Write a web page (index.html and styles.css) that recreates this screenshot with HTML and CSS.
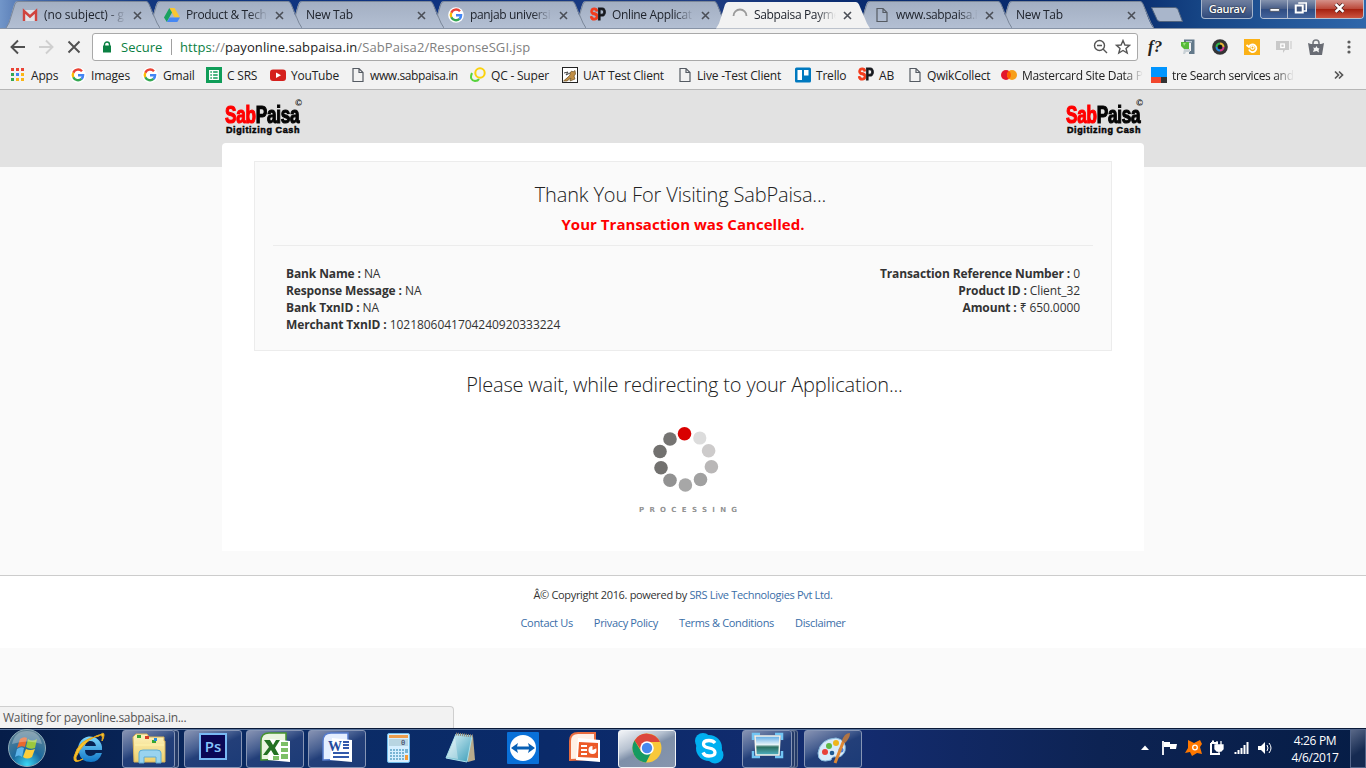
FILE: index.html
```html
<!DOCTYPE html>
<html lang="en">
<head>
<meta charset="utf-8">
<title>Sabpaisa Payment</title>
<link rel="stylesheet" href="styles.css">
</head>
<body>
<svg class="defs" width="0" height="0">
<defs>
<linearGradient id="tabFill" x1="0" y1="0" x2="0" y2="1"><stop offset="0" stop-color="#a3afc2"/><stop offset="1" stop-color="#b3bfd3"/></linearGradient>
<radialGradient id="orb" cx=".5" cy=".95" r=".9"><stop offset="0" stop-color="#39d7f5"/><stop offset=".45" stop-color="#1b6a9e"/><stop offset="1" stop-color="#5d8195"/></radialGradient>
<linearGradient id="ieBlue" x1="0" y1="0" x2="0" y2="1"><stop offset="0" stop-color="#7fd6fb"/><stop offset="1" stop-color="#0f77c8"/></linearGradient>
<linearGradient id="folder" x1="0" y1="0" x2="0" y2="1"><stop offset="0" stop-color="#fdf3bd"/><stop offset="1" stop-color="#edcf6c"/></linearGradient>
<linearGradient id="pad" x1="0" y1="0" x2="1" y2="1"><stop offset="0" stop-color="#e5f7fb"/><stop offset="1" stop-color="#3a9db9"/></linearGradient>
<linearGradient id="photo" x1="0" y1="0" x2="0" y2="1"><stop offset="0" stop-color="#5ba9e6"/><stop offset=".45" stop-color="#e5f3f8"/><stop offset=".58" stop-color="#2c7060"/><stop offset="1" stop-color="#4fb0c4"/></linearGradient>
<symbol id="tab" viewBox="0 0 154 28"><path d="M0 28C4 25 7 3 10 1.5H141C144 3 149 25 154 28Z" fill="url(#tabFill)"/><path d="M0 28L3 23L9 4Q10 1.5 12 1.5H140Q142 1.5 143 4L151 23L154 28" fill="none" stroke="#7b8799"/></symbol>
<symbol id="tabOn" viewBox="0 0 154 28"><path d="M0 28L3 23L9 4Q10 1.5 12 1.5H140Q142 1.5 143 4L151 23L154 28Z" fill="#f2f2f2"/></symbol>
<symbol id="x" viewBox="0 0 9 9"><path d="M1 1L8 8M8 1L1 8" stroke="#4b4f57" stroke-width="1.6"/></symbol>
<symbol id="goog" viewBox="0 0 16 16"><circle cx="8" cy="8" r="7.8" fill="#fff"/><g fill="none" stroke-width="2.4"><path d="M12 4.2A5.2 5.2 0 0 0 3.3 5.8" stroke="#ea4335"/><path d="M3.3 5.7A5.2 5.2 0 0 0 3.3 10.3" stroke="#fbbc05"/><path d="M3.3 10.2A5.2 5.2 0 0 0 11.5 11.9" stroke="#34a853"/><path d="M8 8.2H13.1A5 5 0 0 1 11.4 12" stroke="#4285f4"/></g></symbol>
<symbol id="page" viewBox="0 0 16 16"><path d="M3 1.5H9L13 5.5V14.5H3ZM9 1.5V5.5H13" fill="none" stroke="#555b63" stroke-width="1.2"/></symbol>
</defs>
</svg>

<header class="tabstrip">
  <div class="tab"><svg class="shape"><use href="#tab"/></svg><svg class="ic" viewBox="0 0 16 16"><path d="M1 3H15V14H1Z" fill="#dfe3e8"/><path d="M2 14V4L8 9.5L14 4V14" fill="none" stroke="#d0443e" stroke-width="2.4"/></svg><span class="t">(no subject) - g</span><svg class="close"><use href="#x"/></svg></div>
  <div class="tab"><svg class="shape"><use href="#tab"/></svg><svg class="ic" viewBox="0 0 16 16"><path d="M5.3 1H10.6L16 10.5H10.6Z" fill="#f8c633"/><path d="M5.3 1L8 5.6L2.8 15L0 10.5Z" fill="#1aa260"/><path d="M5.600 10.500H16L13.300 15H2.800Z" fill="#4587f3"/></svg><span class="t">Product &amp; Tech</span><svg class="close"><use href="#x"/></svg></div>
  <div class="tab"><svg class="shape"><use href="#tab"/></svg><span class="t bare">New Tab</span><svg class="close"><use href="#x"/></svg></div>
  <div class="tab"><svg class="shape"><use href="#tab"/></svg><svg class="ic"><use href="#goog"/></svg><span class="t">panjab universi</span><svg class="close"><use href="#x"/></svg></div>
  <div class="tab"><svg class="shape"><use href="#tab"/></svg><span class="ic sp"><b>S</b>P</span><span class="t">Online Applicat</span><svg class="close"><use href="#x"/></svg></div>
  <div class="tab on"><svg class="shape"><use href="#tabOn"/></svg><svg class="ic" viewBox="0 0 16 16"><path d="M1.500 9A6.500 6.500 0 0 1 14.500 9" fill="none" stroke="#9a9a9a" stroke-width="1.800"/></svg><span class="t">Sabpaisa Payme</span><svg class="close"><use href="#x"/></svg></div>
  <div class="tab"><svg class="shape"><use href="#tab"/></svg><svg class="ic"><use href="#page"/></svg><span class="t">www.sabpaisa.i</span><svg class="close"><use href="#x"/></svg></div>
  <div class="tab"><svg class="shape"><use href="#tab"/></svg><span class="t bare">New Tab</span><svg class="close"><use href="#x"/></svg></div>
  <svg class="newtab" viewBox="0 0 34 18"><path d="M1.5 1.5H25Q27 1.5 28 3.5L32.5 15.5H10Q8 15.5 7 13.5Z" fill="#a9b6cb" stroke="#52647f"/></svg>
  <div class="user">Gaurav</div>
  <div class="winbtns">
    <span class="wb"><svg viewBox="0 0 28 17"><path d="M9.500 8.500H19.500V11.500H9.500Z" fill="#fff" stroke="#4c5566"/></svg></span>
    <span class="wb"><svg viewBox="0 0 26 17"><path d="M10 3H18V11H15" fill="none" stroke="#fff" stroke-width="1.5"/><rect x="7.500" y="5.500" width="7" height="7" fill="#42567d" stroke="#fff" stroke-width="2"/></svg></span>
    <span class="wb red"><svg viewBox="0 0 48 17"><path d="M20 4L28 12M28 4L20 12" stroke="#4a2020" stroke-width="4"/><path d="M20 4L28 12M28 4L20 12" stroke="#fff" stroke-width="2.6"/></svg></span>
  </div>
</header>

<div class="toolbar">
  <svg class="nav" viewBox="0 0 92 32"><g fill="none" stroke-width="1.9"><path d="M25 15H12M18 8.500L11.500 15L18 21.500" stroke="#505050"/><path d="M39 15H52M46 8.500L52.500 15L46 21.500" stroke="#cfcfcf"/><path d="M68.500 9.500L79.500 20.500M79.500 9.500L68.500 20.500" stroke="#505050"/></g></svg>
  <div class="urlbox">
    <svg class="lock" viewBox="0 0 10 12"><path d="M2.500 5V3.500A2.500 2.500 0 0 1 7.500 3.500V5" fill="none" stroke="#0b8043" stroke-width="1.4"/><rect x="1" y="4.500" width="8" height="7" fill="#0b8043"/></svg>
    <span class="secure">Secure</span><span class="bar"></span>
    <span class="url"><i class="g">https</i><i>://</i>payonline.sabpaisa.in<i>/SabPaisa2/ResponseSGI.jsp</i></span>
    <svg class="urlic" viewBox="0 0 38 16"><g fill="none" stroke="#555" stroke-width="1.4"><circle cx="6.500" cy="6.500" r="5"/><path d="M4 6.500H9M10 10L14 14"/><path d="M30 1.500L31.900 6L36.500 6.300L33 9.400L34.200 14L30 11.500L25.800 14L27 9.400L23.500 6.300L28.100 6Z"/></g></svg>
  </div>
  <div class="exts">
    <span class="fq">f?</span>
    <svg viewBox="0 0 16 16"><path d="M4 .5H14.500V15H9V12H11V4H4Z" fill="#63798a"/><path d="M6 2H12V3.500H6Z" fill="#b4c2cd"/><path d="M1 3H9V10H4L1 7Z" fill="#57ba3a"/><path d="M3 4L6 4L4 7Z" fill="#9be27d"/><path d="M4 10H10V13H6L5 15H3Z" fill="#c9d1d6"/></svg>
    <svg viewBox="0 0 16 16"><circle cx="8" cy="8" r="7.800" fill="#343536"/><g fill="none" stroke-width="2"><path d="M4.500 8A3.500 3.500 0 0 1 8 4.500" stroke="#31b54b"/><path d="M8 4.500A3.500 3.500 0 0 1 11.500 8" stroke="#e6b635"/><path d="M11.500 8A3.500 3.500 0 0 1 8 11.500" stroke="#d83b8f"/><path d="M8 11.500A3.500 3.500 0 0 1 4.500 8" stroke="#2588df"/></g><circle cx="8" cy="8" r="2" fill="#111"/></svg>
    <svg viewBox="0 0 16 16"><path d="M0 0H16V16H0Z" fill="#fbb116"/><path d="M2.500 6L5 8A3.800 3.800 0 1 1 5 10.500" fill="none" stroke="#fff" stroke-width="1.800"/><circle cx="8.500" cy="8.500" r="1.600" fill="none" stroke="#fff" stroke-width="1.200"/></svg>
    <svg viewBox="0 0 16 16"><path d="M0 2H13V11H9L7 14V11H0Z" fill="#c9c9c9"/><path d="M14 2H16V10H14Z" fill="#dcdcdc"/><rect x="4.800" y="5" width="3.500" height="3.500" fill="none" stroke="#fff" stroke-width="1.300"/></svg>
    <svg viewBox="0 0 16 16"><path d="M5 5V4A3 3 0 0 1 11 4V5" fill="none" stroke="#777a80" stroke-width="1.600"/><path d="M0 4L3 5H13L16 4L14 16H2Z" fill="#696c74"/><path d="M5 13L6 10L5 8.500L7.300 9L8.500 7L9.500 9L11.500 9.500L10.500 11L11 13.500L8.500 12Z" fill="#f5f5f5"/></svg>
    <svg viewBox="0 0 16 16"><g fill="#5c5c5c"><circle cx="9" cy="3" r="1.600"/><circle cx="9" cy="8" r="1.600"/><circle cx="9" cy="13" r="1.600"/></g></svg>
  </div>
</div>

<nav class="bookmarks">
  <span><svg viewBox="0 0 16 16"><g fill="#ea4335"><path d="M0 1h3v3H0zM5 1h3v3H5zM10 1h3v3h-3z"/></g><path d="M0 6h3v3H0zM0 11h3v3H0z" fill="#34a853"/><path d="M5 6h3v3H5z" fill="#4285f4"/><path d="M10 6h3v3h-3zM5 11h3v3H5zM10 11h3v3h-3z" fill="#fbb616"/></svg><em>Apps</em></span>
  <span><svg><use href="#goog"/></svg><em>Images</em></span>
  <span><svg><use href="#goog"/></svg><em>Gmail</em></span>
  <span><svg viewBox="0 0 16 16"><rect width="16" height="16" fill="#0f9d58"/><path d="M3.700 3.700H12.300V12.300H3.700ZM3.700 6.500H12.300M3.700 9.500H12.300M6.500 3.700V12.300" fill="none" stroke="#fff" stroke-width="1.300"/></svg><em>C SRS</em></span>
  <span><svg viewBox="0 0 16 16"><rect y="2.500" width="16" height="11.500" rx="3" fill="#d5201d"/><path d="M6 5.500L11 8.200L6 11Z" fill="#fff"/></svg><em>YouTube</em></span>
  <span><svg><use href="#page"/></svg><em>www.sabpaisa.in</em></span>
  <span><svg viewBox="0 0 16 16"><circle cx="10" cy="6" r="4.700" fill="none" stroke="#fbd20b" stroke-width="2"/><path d="M2 6Q-1 13 5 14Q8 14 9 12" fill="none" stroke="#56d33c" stroke-width="2"/></svg><em>QC - Super</em></span>
  <span><svg viewBox="0 0 16 16"><rect x=".5" y=".5" width="15" height="15" fill="#fff" stroke="#222"/><path d="M1.500 14L5 11L8 8L8.500 5L10 4L11 5L13 3.500L13.500 7L12 9L13 12L8 14L9 11L5 14Z" fill="#c08e45" stroke="#6a5129" stroke-width=".7"/><path d="M2 6L6 5L4 8L8 6" fill="none" stroke="#444"/></svg><em>UAT Test Client</em></span>
  <span><svg><use href="#page"/></svg><em>Live -Test Client</em></span>
  <span><svg viewBox="0 0 16 16"><rect y=".5" width="16" height="15" rx="1.500" fill="#0079bf"/><rect x="2.500" y="3" width="4.500" height="10" fill="#fff"/><rect x="9" y="3" width="4.500" height="5.500" fill="#fff"/></svg><em>Trello</em></span>
  <span><b class="sp"><b>S</b>P</b><em>AB</em></span>
  <span><svg><use href="#page"/></svg><em>QwikCollect</em></span>
  <span><svg viewBox="0 0 16 16"><circle cx="5" cy="8" r="5" fill="#e3172d"/><circle cx="11" cy="8" r="5" fill="#f79f1a"/><path d="M8 4A5 5 0 0 1 8 12A5 5 0 0 1 8 4" fill="#ff5f00"/></svg><em class="fade m">Mastercard Site Data P</em></span>
  <span><svg viewBox="0 0 16 16"><path d="M0 0H16V10H0Z" fill="#0095ff"/><path d="M0 10H10V16H0Z" fill="#f2472e"/><path d="M10 10H16V16H10Z" fill="#333"/></svg><em class="fade r">tre Search services and</em></span>
  <span class="more"><svg viewBox="0 0 16 16"><path d="M1 4.500L4.500 8L1 11.500M5 4.500L8.500 8L5 11.500" fill="none" stroke="#555" stroke-width="1.700"/></svg></span>
</nav>

<div class="viewport">
  <div class="band"></div>
  <div class="wrap">
    <div class="logos">
      <div class="logo"><sup>©</sup><div class="brand"><b>Sab</b>Paisa</div><div class="tag">Digitizing Cash</div></div>
      <div class="logo"><sup>©</sup><div class="brand"><b>Sab</b>Paisa</div><div class="tag">Digitizing Cash</div></div>
    </div>
    <main class="card">
      <section class="box">
        <h2 class="h thanks">Thank You For Visiting SabPaisa...</h2>
        <p class="cancel">Your Transaction was Cancelled.</p>
        <div class="cols">
          <div><p><b>Bank Name :</b> NA</p><p><b>Response Message :</b> NA</p><p><b>Bank TxnID :</b> NA</p><p><b>Merchant TxnID :</b> <span class="num">1021806041704240920333224</span></p></div>
          <div class="right"><p><b>Transaction Reference Number :</b> 0</p><p><b>Product ID :</b> Client_32</p><p><b>Amount :</b> ₹ 650.0000</p></div>
        </div>
      </section>
      <h2 class="h wait">Please wait, while redirecting to your Application...</h2>
      <div class="spin">
        <svg viewBox="0 0 70 70"><g><circle cx="33.500" cy="9.800" r="6.800" fill="#d90000"/><circle cx="48.800" cy="14" r="6.600" fill="#dcdcdc"/><circle cx="57.600" cy="26.700" r="6.800" fill="#cdcbcb"/><circle cx="60.400" cy="42.800" r="6.800" fill="#b9b7b7"/><circle cx="49.500" cy="55.500" r="6.800" fill="#a1a1a1"/><circle cx="34.400" cy="61" r="6.800" fill="#a7a7a7"/><circle cx="19" cy="56.300" r="6.800" fill="#929292"/><circle cx="10" cy="43.800" r="6.800" fill="#72716f"/><circle cx="9" cy="27.500" r="6.800" fill="#72716f"/><circle cx="19" cy="15" r="6.800" fill="#757472"/></g></svg>
        <div class="proc">PROCESSING</div>
      </div>
    </main>
  </div>
  <footer class="foot">
    <p class="copy">Â© Copyright 2016. powered by <a>SRS Live Technologies Pvt Ltd.</a></p>
    <p class="links"><a>Contact Us</a><a>Privacy Policy</a><a>Terms &amp; Conditions</a><a>Disclaimer</a></p>
  </footer>
  <div class="status">Waiting for payonline.sabpaisa.in...</div>
</div>

<div class="taskbar">
  <div class="apps">
    <span><svg viewBox="0 0 40 40"><circle cx="20" cy="20" r="18.500" fill="url(#orb)" stroke="#8daab8"/><g transform="translate(8 8)"><path d="M5 3Q9 0 12 2L10 11Q6 9 2 12Z" fill="#e9692e"/><path d="M13 3Q17 6 22 3L20 12Q15 14 11 11Z" fill="#9bc83e"/><path d="M2 13Q6 10 9 12L7 21Q4 18 0 21Z" fill="#5db4ea"/><path d="M11 13Q15 15 20 13L17 21Q12 24 8 21Z" fill="#fbce3b"/></g><path d="M5 16Q8 3 20 3T35 16Q20 11 5 16" fill="#fff" opacity=".28"/></svg></span>
    <span><svg viewBox="0 0 40 40"><path d="M10 25A12 12 0 1 1 33 22H16Q16 28 22 28Q25 28 27 25H33Q30 34 22 34Q12 34 10 25ZM16 18H27Q26 13 21 13Q17 13 16 18Z" fill="url(#ieBlue)"/><path d="M30 8Q35 3 35 7Q35 10 33 13Q35 4 27 8Q13 15 7 29Q6 35 14 31Q4 37 5 29Q9 11 30 8" fill="#f8c52f" stroke="#e7a81d"/></svg></span>
    <span class="btn stack"><svg viewBox="0 0 40 40"><path d="M4 9L7 6H18L20 9H35V13H36V34H5Z" fill="url(#folder)" stroke="#d9b45a"/><path d="M8 7H12V10H8ZM23 12H27V15H23Z" fill="#38a532"/><path d="M16 8H20V11H16Z" fill="#d93e24"/><path d="M25 10H28V13H25Z" fill="#258bda"/><path d="M6 17H35" stroke="#fff4ae"/><path d="M10 35V25Q10 22 14 22H28Q32 22 32 25V35H27V29H15V35Z" fill="#99d3ef" stroke="#5eacd4"/></svg></span>
    <span class="btn"><svg viewBox="0 0 40 40"><rect x="7" y="6" width="26" height="25" fill="#0a0755" stroke="#78b8f3" stroke-width="2"/><text x="20" y="23.500" class="ps">Ps</text></svg></span>
    <span class="btn"><svg viewBox="0 0 40 40"><path d="M6 32V13Q6 5 14 5H31V31Z" fill="#eaf5df" stroke="#46942e" stroke-width="1.500"/><path d="M15 11L35 13V34L13 32Z" fill="#fff"/><path d="M9 12H15L18 17L21 12H25L20 20L24 27H19L16 22L12 27H8L14 19Z" fill="#247123"/><path d="M26 14H33V18H26ZM26 20H33V24H26ZM26 26H33V31H26ZM18 28H24V32H18Z" fill="#7dbf66"/></svg></span>
    <span class="btn"><svg viewBox="0 0 40 40"><path d="M6 32V13Q6 5 14 5H31V31Z" fill="#e5efff" stroke="#567ccd" stroke-width="1.500"/><path d="M15 10L35 12V34L13 32Z" fill="#fff"/><text x="25" y="23" class="word">W</text><path d="M26 14H32M26 17H32M26 20H32M16 25H32M16 29H32" stroke="#3259aa" stroke-width="1.800"/></svg></span>
    <span><svg viewBox="0 0 40 40"><rect x="8.500" y="5.500" width="22" height="29" rx="1.500" fill="#d6efff" stroke="#6ebae9"/><path d="M10 7H29V10H10Z" fill="#ed9e4e"/><path d="M10 11H29V18H10Z" fill="#b8d5e2"/><text x="22" y="17" class="calc">0</text><path d="M11 22H25M11 25H25M11 28H25M11 31H25" stroke="#79b4d4" stroke-width="2" stroke-dasharray="2 1"/><path d="M26 21H29V25H26Z" fill="#79b4d4"/><path d="M26 27H29V32H26Z" fill="#f59a36"/></svg></span>
    <span><svg viewBox="0 0 40 40"><path d="M17 6L32 8L34 32L27 34Z" fill="#b8ab8c"/><path d="M15 6L31 8L26 34L5 30Z" fill="url(#pad)" stroke="#a9e0eb"/><path d="M15 6L32 8" stroke="#8e8476" stroke-width="3" stroke-dasharray="1 1"/><path d="M14 9L6 29L17 31Z" fill="#fff" opacity=".35"/></svg></span>
    <span><svg viewBox="0 0 40 40"><rect x="4" y="4" width="32" height="32" rx="1" fill="#0970d8"/><circle cx="20" cy="20" r="13" fill="#fff"/><path d="M8 20L15 15L14 18.500H26L25 15L32 20L25 25L26 21.500H14L15 25Z" fill="#075fb5"/></svg></span>
    <span><svg viewBox="0 0 40 40"><path d="M5 32V13Q5 5 13 5H30V31Z" fill="#fff0e6" stroke="#e86c40" stroke-width="2"/><path d="M13 10L35 12V34L11 32Z" fill="#fff"/><path d="M14 14L33 15V30L13 29Z" fill="#ec5a28"/><path d="M16 18H22M16 22H22M16 26H22" stroke="#fff" stroke-width="2"/><circle cx="27.500" cy="22" r="4" fill="#fff"/><path d="M27.500 22V17L32 20Z" fill="#ec5a28"/></svg></span>
    <span class="btn active"><svg viewBox="0 0 40 40"><circle cx="20" cy="20" r="14.500" fill="#f8c83a"/><path d="M7.500 12.500A14.500 14.500 0 0 1 33 14H20L14 22Z" fill="#dc473c"/><path d="M7.500 12.500L14.500 24L24 25L19 34.500A14.500 14.500 0 0 1 7.500 12.500" fill="#159a62"/><circle cx="20" cy="20" r="6.800" fill="#fff"/><circle cx="20" cy="20" r="5.200" fill="#4788ed"/></svg></span>
    <span><svg viewBox="0 0 40 40"><circle cx="14" cy="13" r="8" fill="#00aff0"/><circle cx="26" cy="27" r="8.500" fill="#00aff0"/><circle cx="20" cy="20" r="13" fill="#00aff0"/><path d="M26 15Q24 12.500 20 12.500Q14.500 12.500 14.500 16Q14.500 19 20 20Q26 21 26 24.500Q26 28 20 28Q15.500 28 14 24.500" fill="none" stroke="#fff" stroke-width="3.300"/></svg></span>
    <span class="btn stack2"><svg viewBox="0 0 40 40"><path d="M6 12V6H13M28 6H35V12M35 23V29H28M13 29H6V23" fill="none" stroke="#72c5f4" stroke-width="2.500"/><path d="M8 8H33L32 27H9Z" fill="url(#photo)" stroke="#f4f4ec" stroke-width="1.500"/></svg></span>
    <span class="btn"><svg viewBox="0 0 40 40"><path d="M5 25Q7 11 23 10Q34 12 32 23Q29 30 23 29Q19 28 18 32Q5 36 5 25" fill="#d8ebfa" stroke="#86b9dc"/><circle cx="12" cy="24" r="3" fill="#e8413a"/><circle cx="16" cy="18" r="3" fill="#5eb944"/><circle cx="23" cy="15" r="3" fill="#efb51a"/><circle cx="19" cy="25" r="2.300" fill="#205b91"/><circle cx="28" cy="22" r="2.500" fill="#4d80d7"/><path d="M22 35L31 12" stroke="#df8733" stroke-width="3"/><path d="M29 13Q31 5 37 5Q37 10 32 15Z" fill="#b07444"/></svg></span>
  </div>
  <svg class="tray" viewBox="0 0 140 40"><path d="M5 22L9 17.500L13 22Z" fill="#fff"/><path d="M27 13V27" stroke="#fff" stroke-width="1.800"/><path d="M28 14H34V16H41L40 21H34V19H28Z" fill="#fff"/><path d="M52 12L58 15L64 12L66 16L64 19L66 26L61 25L56 28L54 24L49 25L52 20Z" fill="#ff7800"/><circle cx="59" cy="19.500" r="2.300" fill="none" stroke="#fff" stroke-width="1.300"/><path d="M75 15H82M75 15V26H84M77 12.500V14" fill="none" stroke="#fff" stroke-width="2"/><path d="M79 17H87V21L85 23H81L79 21ZM81 13V17M85 13V17M83 23V26" fill="#fff" stroke="#fff" stroke-width="1.300"/><path d="M99.500 26V24M102.500 26V22M105.500 26V20M108.500 26V17M111.500 26V14" stroke="#fff" stroke-width="2"/><path d="M122 18H125L129 14V26L125 22H122Z" fill="#fff"/><path d="M131 17Q133 20 131 23M133 15Q137 20 133 25" fill="none" stroke="#fff"/></svg>
  <div class="clock"><div>4:26 PM</div><div>4/6/2017</div></div>
  <div class="peek"></div>
</div>
</body>
</html>
```
FILE: styles.css
```css
* { box-sizing: border-box; }
body { margin: 0; width: 1366px; height: 768px; overflow: hidden; display: flex; flex-direction: column; font-family: "Open Sans", "Noto Sans", sans-serif; font-size: 12px; color: #333; background: #fafafa; }
p, h2 { margin: 0; }
i, em { font-style: normal; }
.defs { position: absolute; }

.tabstrip { height: 29px; flex: none; display: flex; padding-left: 6px; background: linear-gradient(90deg, #7296c9 0, #476ba9 30px, #12377f 150px, #0d3280 420px, #203e83 700px, #0a2c70 850px, #07296b 1120px, #164585 1200px, #2f67ab 1366px); border-bottom: 1px solid #8793a6; }
.tab { width: 142px; height: 29px; flex: none; position: relative; display: flex; align-items: center; padding-left: 16px; }
.tab:nth-child(1) { z-index: 8; } .tab:nth-child(2) { z-index: 7; } .tab:nth-child(3) { z-index: 6; } .tab:nth-child(4) { z-index: 5; } .tab:nth-child(5) { z-index: 4; } .tab:nth-child(6) { z-index: 9; } .tab:nth-child(7) { z-index: 2; } .tab:nth-child(8) { z-index: 1; }
.shape { position: absolute; left: 0; top: 0; width: 154px; height: 28px; z-index: -1; }
.tab.on .shape { height: 29px; }
.ic { width: 16px; height: 16px; flex: none; margin-right: 6px; }
.t { width: 82px; white-space: nowrap; letter-spacing: -.35px; color: #20252e; line-height: 18px; -webkit-mask-image: linear-gradient(90deg, #000 76%, transparent); mask-image: linear-gradient(90deg, #000 76%, transparent); }
.tab:nth-child(1) .t { letter-spacing: -.1px; }
.t.bare { width: 104px; letter-spacing: -.3px; }
.close { width: 9px; height: 9px; margin-left: 7px; margin-top: 1px; flex: none; }
.sp { font: bold 16px/16px "Liberation Sans", sans-serif; letter-spacing: -1px; color: #16181d; width: 16px; height: 16px; display: inline-block; transform: scale(.78, 1.02); transform-origin: left; white-space: nowrap; -webkit-text-stroke: 1px; }
.sp b { color: #f33c1c; font: inherit; }
.newtab { width: 34px; height: 18px; margin: 6px 0 0 8px; flex: none; }
.user { width: 52px; height: 19px; margin-left: 17px; border: 1px solid #a5b5cc; border-top: 0; border-radius: 0 0 4px 4px; background: linear-gradient(#707f9e, #2f4a7d); color: #fff; text-align: center; font-size: 11px; line-height: 18px; font-weight: 600; letter-spacing: -.3px; text-shadow: 0 0 2px #000; }
.winbtns { display: flex; width: 104px; height: 19px; margin-left: 7px; border: 1px solid #b6c1d3; border-top: 0; border-radius: 0 0 4px 4px; overflow: hidden; }
.wb { width: 28px; background: linear-gradient(#8593ae, #455b86 50%, #2f4c81 50%, #42639b); border-right: 1px solid #aeb9cc; }
.wb svg { width: 100%; height: 17px; display: block; }
.wb.red { width: 48px; background: linear-gradient(#d59189, #bc4a3b 48%, #a4200f 50%, #cc5440); border: 0; }

.toolbar { height: 36px; flex: none; display: flex; align-items: center; background: #f2f2f2; }
.nav { width: 92px; height: 32px; margin-top: 2px; }
.urlbox { width: 1046px; height: 28px; margin-top: 0; border: 1px solid #a9a9a9; border-radius: 3px; background: #fff; display: flex; align-items: center; padding-left: 9px; }
.lock { width: 10px; height: 12px; margin-right: 9px; }
.secure { width: 50px; color: #0b8043; font-size: 13px; }
.bar { width: 1px; height: 16px; background: #a0a0a0; margin-right: 8px; }
.url { flex: 1; color: #222; font-size: 13px; letter-spacing: .08px; }
.url i { color: #808080; } .url i.g { color: #0b8043; }
.urlic { width: 38px; height: 16px; margin-right: 6px; }
.exts { display: flex; gap: 16px; margin-left: 10px; align-items: center; }
.exts svg { width: 16px; height: 16px; }
.fq { width: 16px; white-space: nowrap; font: italic bold 17px/18px "Liberation Serif", serif; color: #222; }

.bookmarks { height: 25px; flex: none; padding: 0 0 5px 11px; background: #f2f2f2; border-bottom: 1px solid #b6b6b6; display: grid; grid-template-columns: 59px 72px 64px 64px 81px 119px 92px 116px 117px 63px 50px 93px 150px 183px 20px; align-items: center; color: #222; }
.bookmarks > span { display: flex; align-items: center; white-space: nowrap; letter-spacing: -.2px; height: 20px; }
.bookmarks > span:nth-child(6) { letter-spacing: -.4px; }
.bookmarks > span:nth-child(8) { letter-spacing: -.25px; }
.bookmarks svg { width: 16px; height: 16px; margin-right: 5px; flex: none; }
.bookmarks .sp { margin-right: 5px; }
.bookmarks span:nth-child(6) svg, .bookmarks span:nth-child(9) svg, .bookmarks span:nth-child(12) svg { margin: 0 4px 0 -1px; }
.bookmarks span:first-child svg { margin-right: 4px; }
.fade { -webkit-mask-image: linear-gradient(90deg, #000 84%, transparent); mask-image: linear-gradient(90deg, #000 84%, transparent); }
.fade.r { letter-spacing: -.33px; }
.fade.m { letter-spacing: -.3px; }

.viewport { height: 638px; flex: none; position: relative; background: #fafafa; }
.band { height: 77px; background: #e2e2e2; }
.wrap { width: 922px; margin: -77px auto 0; position: relative; }
.logos { height: 53px; display: flex; justify-content: space-between; padding: 10px 2px 0 3px; }
.logo { width: 76px; color: #050505; display: flex; flex-direction: column; }
.logo sup { align-self: flex-end; font: bold 9px/7px "Liberation Sans", sans-serif; height: 6px; margin-right: -1px; }
.brand { font: bold 23px/19px "Liberation Sans", sans-serif; letter-spacing: -.3px; width: 98px; transform: scaleX(.745); transform-origin: left; height: 19px; -webkit-text-stroke: 1.2px; white-space: nowrap; }
.brand b { color: #f00; }
.tag { font: bold 9px/10px "Liberation Sans", sans-serif; -webkit-text-stroke: .5px; letter-spacing: .6px; white-space: nowrap; padding-left: 1px; }
.card { height: 408px; background: #fff; border-radius: 4px 4px 0 0; padding: 18px 32px 0; }
.box { height: 190px; background: #fafafa; border: 1px solid #ececec; padding: 20px 18px 0; }
.h { font-weight: 300; font-size: 20px; line-height: 26px; text-align: center; color: #222; white-space: nowrap; }
.thanks { letter-spacing: -.15px; margin-right: 5px; }
.cancel { color: #f00; font-size: 15px; font-weight: 700; text-align: center; line-height: 20px; margin-top: 6px; border-bottom: 1px solid #ececec; height: 32px; letter-spacing: .03px; }
.cols { display: flex; justify-content: space-between; padding: 19px 13px 0 13px; line-height: 17px; letter-spacing: -.08px; }
.cols p { white-space: nowrap; }
.cols b { letter-spacing: -.12px; }
.num { letter-spacing: -.04px; }
.right { text-align: right; }
.wait { margin: 21px -3px 0 0; letter-spacing: -.18px; }
.spin { margin: 26px auto 0; width: 110px; }
.spin svg { width: 70px; height: 70px; display: block; margin-left: 23px; }
.proc { font: bold 7px/10px "DejaVu Sans", sans-serif; letter-spacing: 5.3px; color: #929292; margin: 11px 0 0 11px; white-space: nowrap; }
.foot { height: 73px; margin-top: 24px; border-top: 1px solid #ccc; background: #fff; text-align: center; font-size: 11px; letter-spacing: -.33px; line-height: 16px; padding-top: 11px; }
.foot a { color: #3a6ea8; }
.links { display: flex; justify-content: center; gap: 21px; margin-top: 12px; }
.status { position: absolute; left: 0; bottom: 0; width: 454px; height: 22px; background: #f2f2f2; border: 1px solid #cfcfcf; border-width: 1px 1px 0 0; border-radius: 0 4px 0 0; padding-left: 3px; line-height: 22px; color: #555; letter-spacing: -.31px; }

.taskbar { height: 40px; flex: none; display: flex; border-top: 1px solid #0a1a38; box-shadow: inset 0 1px #57739d; background: linear-gradient(90deg, #061d49, #0b2c66 300px, #0a2a69 550px, #142c70 850px, #0d2353 1100px, #061d46); }
.apps { display: grid; grid-template-columns: repeat(14, 62px); margin-left: -4px; width: 1141px; }
.apps > span { display: flex; justify-content: center; align-items: center; height: 39px; }
.apps svg { width: 40px; height: 40px; margin-top: -1px; flex: none; }
.apps .btn svg { margin-top: -3px; }
.apps .btn { margin: 1px 2px 0; height: 38px; border: 1px solid #8695b5; border-radius: 3px; background: linear-gradient(155deg, #8793b3 0, #475f91 35%, #233f79 50%, #1c3b77); }
.apps .active { background: linear-gradient(155deg, #f3f5f8 0, #b6c1d0 35%, #7f90a9 50%, #8695ad); border-color: #f0f3f7; }
.apps .stack { margin-right: 7px; box-shadow: 4px 0 0 -1px #233a68, 4px 0 #8190ae; }
.apps .stack2 { margin-right: 10px; box-shadow: 3px 0 0 -1px #233a68, 3px 0 #71819f, 6px 0 0 -1px #233a68, 6px 0 #61718f; }
.ps { font: 600 15px "Open Sans", sans-serif; fill: #86c5fb; text-anchor: middle; }
.word { font: bold 14px "Liberation Serif", serif; fill: #254b9e; text-anchor: end; }
.calc { font: 7px "DejaVu Sans Mono", monospace; fill: #335; }
.tray { width: 140px; height: 40px; flex: none; margin-left: -1px; margin-top: -1px; }
.clock { width: 74px; padding-left: 4px; text-align: center; color: #fff; line-height: 17px; padding-top: 3px; letter-spacing: -.35px; }
.peek { flex: 1; border: 1px solid #53658a; background: linear-gradient(145deg, #596887, #152a51 60%); }
```
